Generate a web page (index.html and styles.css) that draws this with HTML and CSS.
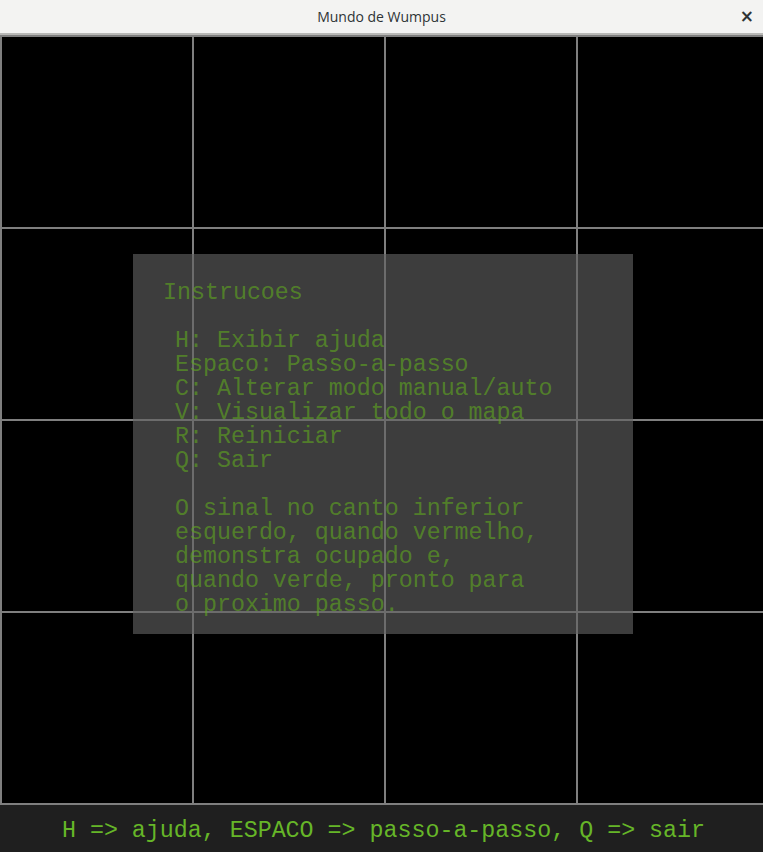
FILE: index.html
```html
<!DOCTYPE html>
<html>
<head>
<meta charset="utf-8">
<title>Mundo de Wumpus</title>
<link rel="stylesheet" href="styles.css">
</head>
<body>
<div class="window">
  <header class="titlebar">
    <span class="title">Mundo de Wumpus</span>
    <span class="close">×</span>
  </header>
  <main class="board">
    <div class="grid">
      <div class="cell"></div><div class="cell"></div><div class="cell"></div><div class="cell"></div>
      <div class="cell"></div><div class="cell"></div><div class="cell"></div><div class="cell"></div>
      <div class="cell"></div><div class="cell"></div><div class="cell"></div><div class="cell"></div>
      <div class="cell"></div><div class="cell"></div><div class="cell"></div><div class="cell"></div>
    </div>
    <div class="help">
      <div class="help-title">Instrucoes</div>
      <div class="help-body">
        <div class="line"></div>
        <div class="line">H: Exibir ajuda</div>
        <div class="line">Espaco: Passo-a-passo</div>
        <div class="line">C: Alterar modo manual/auto</div>
        <div class="line">V: Visualizar todo o mapa</div>
        <div class="line">R: Reiniciar</div>
        <div class="line">Q: Sair</div>
        <div class="line"></div>
        <div class="line">O sinal no canto inferior</div>
        <div class="line">esquerdo, quando vermelho,</div>
        <div class="line">demonstra ocupado e,</div>
        <div class="line">quando verde, pronto para</div>
        <div class="line">o proximo passo.</div>
      </div>
    </div>
  </main>
  <footer class="statusbar"><span class="status-text">H =&gt; ajuda, ESPACO =&gt; passo-a-passo, Q =&gt; sair</span></footer>
</div>
</body>
</html>
```

FILE: styles.css
```css
html, body {
  margin: 0;
  padding: 0;
  background: #000;
}

.window {
  width: 763px;
  height: 852px;
  overflow: hidden;
  display: flex;
  flex-direction: column;
}

.titlebar {
  height: 33px;
  flex: 0 0 33px;
  background: #f3f3f2;
  border-bottom: 2px solid #b9b9b7;
  display: flex;
  align-items: center;
  justify-content: center;
  position: relative;
  font-family: "Open Sans", "Noto Sans", sans-serif;
}

.title {
  font-size: 14px;
  color: #2e3436;
}

.close {
  position: absolute;
  right: 9px;
  top: 6px;
  font-size: 17px;
  line-height: 20px;
  font-weight: bold;
  color: #2e3436;
  font-family: "DejaVu Sans", sans-serif;
}

.board {
  position: relative;
  height: 770px;
  flex: 0 0 770px;
  background: #000;
  overflow: hidden;
}

.grid {
  display: grid;
  grid-template-columns: repeat(4, 192px);
  grid-template-rows: repeat(4, 192px);
  width: 770px;
  border-bottom: 2px solid #7f7f7f;
}

.cell {
  box-sizing: border-box;
  border-left: 2px solid #7f7f7f;
  border-top: 2px solid #7f7f7f;
}

.help {
  position: absolute;
  left: 133px;
  top: 219px;
  width: 500px;
  height: 380px;
  box-sizing: border-box;
  padding: 27px 0 0 30px;
  background: rgba(96, 96, 96, 0.63);
  font-family: "Liberation Mono", "Courier New", monospace;
  font-size: 23.3px;
  line-height: 24px;
  color: rgba(96, 170, 30, 0.62);
}

.help-title {
  height: 24px;
  white-space: pre;
}

.help-body {
  padding-left: 12px;
}

.line {
  height: 24px;
  white-space: pre;
}

.statusbar {
  flex: 1 1 auto;
  background: #1f1f1f;
  display: flex;
  align-items: center;
  justify-content: center;
  padding-left: 4px;
  padding-top: 5px;
}

.status-text {
  color: #66b628;
  font-family: "Liberation Mono", "Courier New", monospace;
  font-size: 23.3px;
  line-height: 26px;
  white-space: pre;
}
```
